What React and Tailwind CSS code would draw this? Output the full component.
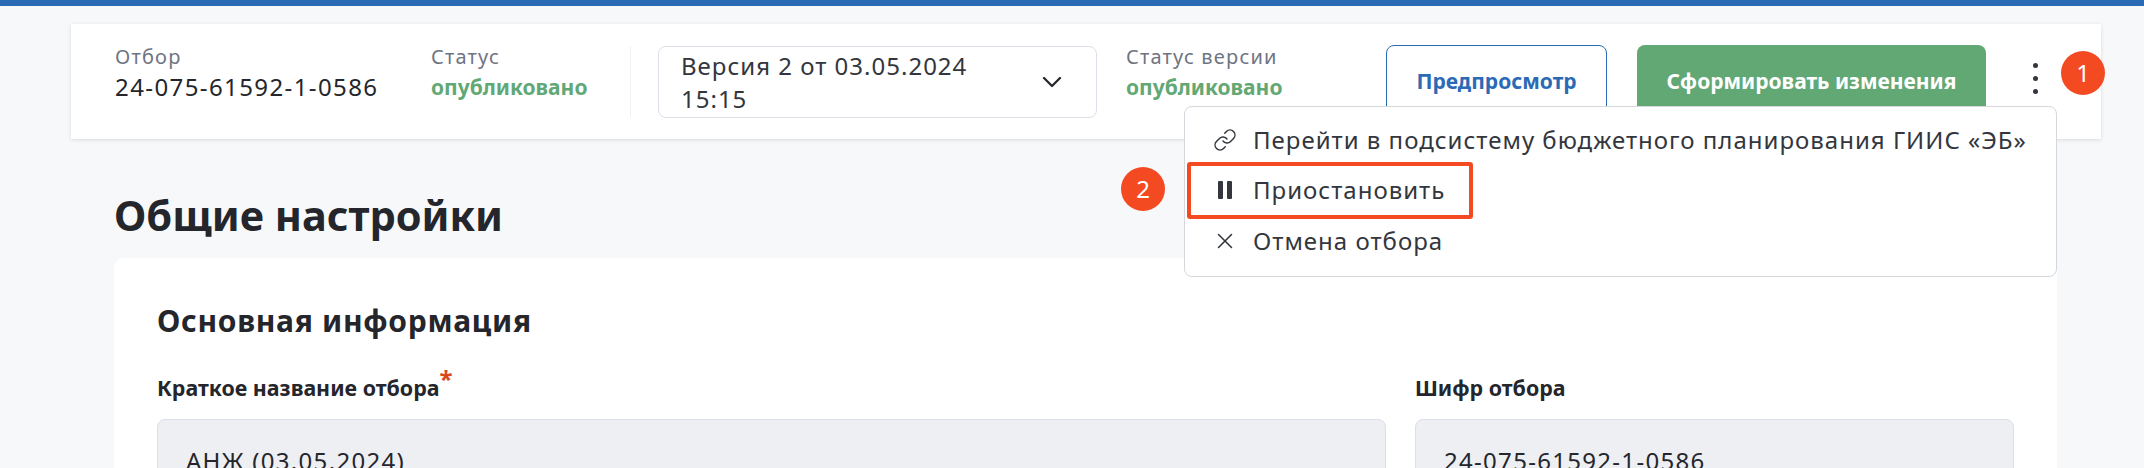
import React from "react";
import { ChevronDown, Link, Pause, X } from "lucide-react";

const font = { fontFamily: '"Noto Sans", sans-serif' };

const Field = ({ label, value, green, className }) => (
  <div className={`self-start pt-[19px] ${className}`}>
    <p className="text-[20px] leading-[28px] tracking-[1.2px] text-[#6f7482]">{label}</p>
    <p className={green ? "text-[21px] leading-[33px] font-bold text-[#62a875]" : "text-[24px] leading-[32px] tracking-[1.4px] text-[#24262b]"}>
      {value}
    </p>
  </div>
);

const MenuItem = ({ icon, children, className = "" }) => (
  <div className={`flex h-[50px] items-center gap-[18px] pl-[30px] text-[24px] tracking-[1px] text-[#33363d] ${className}`}>
    <span className="flex w-[20px] justify-center">{icon}</span>
    <span className="whitespace-nowrap">{children}</span>
  </div>
);

const Badge = ({ n, className }) => (
  <div className={`absolute flex h-[44px] w-[44px] items-center justify-center rounded-full bg-[#f44a22] text-[24px] text-white ${className}`}>
    {n}
  </div>
);

export default function App() {
  return (
    <div className="relative h-[468px] w-[2144px] overflow-hidden bg-[#f7f8fa]" style={font}>
      <div className="h-[6px] bg-[#2b6ab5]" />

      <div className="ml-[71px] mt-[18px] flex h-[115px] w-[2030px] items-center bg-white pl-[44px] shadow-[0_1px_4px_rgba(0,0,0,0.12)]">
        <Field label="Отбор" value="24-075-61592-1-0586" className="w-[316px] shrink-0 whitespace-nowrap" />
        <Field label="Статус" value="опубликовано" green className="w-[199px]" />
        <div className="h-[71px] w-px bg-[#f0f1f4]" />
        <div className="ml-[27px] flex h-[72px] w-[439px] items-center justify-between rounded-[8px] border border-[#dcdfe8] pl-[22px] pr-[28px] text-[24px] leading-[33px] tracking-[1px] text-[#33363d]">
          <span className="w-[320px]">Версия 2 от 03.05.2024 15:15</span>
          <ChevronDown size={32} strokeWidth={1.7} className="shrink-0 text-[#24262b]" />
        </div>
        <Field label="Статус версии" value="опубликовано" green className="ml-[29px] w-[260px]" />
        <div className="mt-[21px] flex h-[94px] w-[221px] items-center justify-center self-start rounded-[8px] border border-[#2b6ab5] pb-[20px] text-[21px] font-bold text-[#2b6ab5]">
          Предпросмотр
        </div>
        <div className="ml-[30px] mt-[21px] flex h-[94px] w-[349px] items-center justify-center self-start rounded-[8px] bg-[#62a875] pb-[20px] text-[21px] font-bold text-white">
          Сформировать изменения
        </div>
        <div className="ml-[47px] flex -translate-y-[3px] flex-col gap-[8px]">
          <span className="h-[5px] w-[5px] rounded-full bg-[#33363d]" />
          <span className="h-[5px] w-[5px] rounded-full bg-[#33363d]" />
          <span className="h-[5px] w-[5px] rounded-full bg-[#33363d]" />
        </div>
      </div>

      <div className="ml-[114px] w-[1943px]">
        <h1 className="mt-[50px] text-[41.5px] font-bold leading-[52px] text-[#24262b]">Общие настройки</h1>
        <div className="mt-[17px] rounded-t-[10px] bg-white px-[43px] pt-[43px]">
          <h2 className="text-[30px] font-bold leading-[40px] tracking-[0.7px] text-[#24262b]">Основная информация</h2>
          <div className="mt-[33px] flex gap-[29px]">
            <div className="w-[1229px]">
              <p className="h-[28px] text-[21.4px] font-bold leading-[28px] text-[#24262b]">
                Краткое название отбора<span className="align-super text-[24px] leading-[0] text-[#d9481c]">*</span>
              </p>
              <div className="mt-[17px] h-[100px] rounded-[8px] border border-[#dcdfe8] bg-[#eeeff3] px-[28px] pt-[23px] text-[24px] tracking-[1.3px] text-[#24262b]">
                АНЖ (03.05.2024)
              </div>
            </div>
            <div className="w-[599px]">
              <p className="h-[28px] text-[21.4px] font-bold leading-[28px] text-[#24262b]">Шифр отбора</p>
              <div className="mt-[17px] h-[100px] rounded-[8px] border border-[#dcdfe8] bg-[#eeeff3] px-[28px] pt-[23px] text-[24px] tracking-[1.3px] text-[#24262b]">
                24-075-61592-1-0586
              </div>
            </div>
          </div>
        </div>
      </div>

      {/* выпадающее меню поверх страницы */}
      <div className="absolute left-[1184px] top-[106px] h-[171px] w-[873px] rounded-[8px] border border-[#d5d7dc] bg-white pt-[8px]">
        <MenuItem icon={<Link size={24} strokeWidth={1.5} className="shrink-0" />}>
          Перейти в подсистему бюджетного планирования ГИИС «ЭБ»
        </MenuItem>
        <MenuItem icon={<Pause size={24} strokeWidth={0} fill="#33363d" className="shrink-0" />}>Приостановить</MenuItem>
        <MenuItem className="pt-[2px]" icon={<X size={26} strokeWidth={1.4} className="shrink-0" />}>Отмена отбора</MenuItem>
        <div className="absolute left-[2px] top-[55px] h-[57px] w-[286px] rounded-[3px] border-[4px] border-[#f44a22]" />
      </div>

      <Badge n="1" className="left-[2061px] top-[51px]" />
      <Badge n="2" className="left-[1121px] top-[167px]" />
    </div>
  );
}
